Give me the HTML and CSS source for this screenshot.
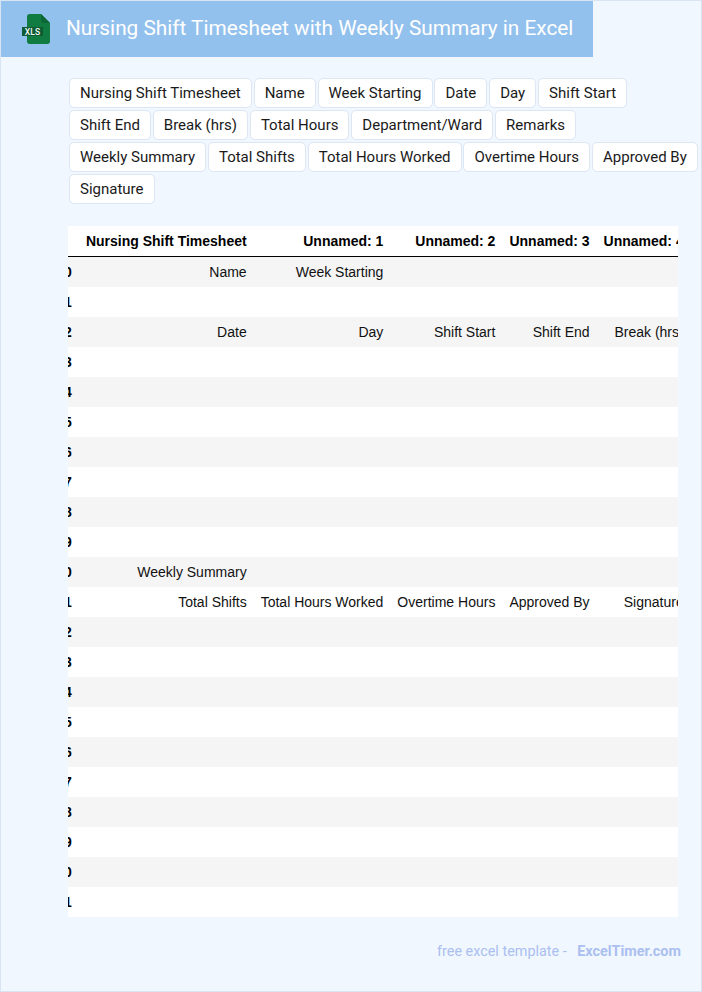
FILE: index.html
```html
<!DOCTYPE html>
<html lang="en">
<head>
<meta charset="utf-8">
<title>Nursing Shift Timesheet with Weekly Summary in Excel</title>
<link rel="stylesheet" href="styles.css">
</head>
<body>
<div class="page">
  <header class="banner">
    <svg class="file-icon" width="28" height="30" viewBox="0 0 28 30" aria-hidden="true">
      <path d="M5 2.500C5 1.100 6.100 0 7.500 0H19l9 9v18.500c0 1.400-1.100 2.500-2.500 2.500h-18C6.100 30 5 28.900 5 27.500Z" fill="#107c41"/>
      <path d="M19 0l9 9h-6.500C20.100 9 19 7.900 19 6.500Z" fill="#0c6636"/>
      <rect x="0" y="13" width="21" height="9" fill="#0d5c33"/>
      <text class="file-icon-label" x="10.500" y="20.800" text-anchor="middle">XLS</text>
    </svg>
    <h1 class="title">Nursing Shift Timesheet with Weekly Summary in Excel</h1>
  </header>

  <ul class="tags">
    <li class="tag">Nursing Shift Timesheet</li>
    <li class="tag">Name</li>
    <li class="tag">Week Starting</li>
    <li class="tag">Date</li>
    <li class="tag">Day</li>
    <li class="tag">Shift Start</li>
    <li class="tag">Shift End</li>
    <li class="tag">Break (hrs)</li>
    <li class="tag">Total Hours</li>
    <li class="tag">Department/Ward</li>
    <li class="tag">Remarks</li>
    <li class="tag">Weekly Summary</li>
    <li class="tag">Total Shifts</li>
    <li class="tag">Total Hours Worked</li>
    <li class="tag">Overtime Hours</li>
    <li class="tag">Approved By</li>
    <li class="tag">Signature</li>
  </ul>

  <div class="sheet">
    <table class="grid">
      <thead>
        <tr><th></th><th>Nursing Shift Timesheet</th><th>Unnamed: 1</th><th>Unnamed: 2</th><th>Unnamed: 3</th><th>Unnamed: 4</th></tr>
      </thead>
      <tbody>
        <tr><th>0</th><td>Name</td><td>Week Starting</td><td></td><td></td><td></td></tr>
        <tr><th>1</th><td></td><td></td><td></td><td></td><td></td></tr>
        <tr><th>2</th><td>Date</td><td>Day</td><td>Shift Start</td><td>Shift End</td><td>Break (hrs)</td></tr>
        <tr><th>3</th><td></td><td></td><td></td><td></td><td></td></tr>
        <tr><th>4</th><td></td><td></td><td></td><td></td><td></td></tr>
        <tr><th>5</th><td></td><td></td><td></td><td></td><td></td></tr>
        <tr><th>6</th><td></td><td></td><td></td><td></td><td></td></tr>
        <tr><th>7</th><td></td><td></td><td></td><td></td><td></td></tr>
        <tr><th>8</th><td></td><td></td><td></td><td></td><td></td></tr>
        <tr><th>9</th><td></td><td></td><td></td><td></td><td></td></tr>
        <tr><th>10</th><td>Weekly Summary</td><td></td><td></td><td></td><td></td></tr>
        <tr><th>11</th><td>Total Shifts</td><td>Total Hours Worked</td><td>Overtime Hours</td><td>Approved By</td><td>Signature</td></tr>
        <tr><th>12</th><td></td><td></td><td></td><td></td><td></td></tr>
        <tr><th>13</th><td></td><td></td><td></td><td></td><td></td></tr>
        <tr><th>14</th><td></td><td></td><td></td><td></td><td></td></tr>
        <tr><th>15</th><td></td><td></td><td></td><td></td><td></td></tr>
        <tr><th>16</th><td></td><td></td><td></td><td></td><td></td></tr>
        <tr><th>17</th><td></td><td></td><td></td><td></td><td></td></tr>
        <tr><th>18</th><td></td><td></td><td></td><td></td><td></td></tr>
        <tr><th>19</th><td></td><td></td><td></td><td></td><td></td></tr>
        <tr><th>20</th><td></td><td></td><td></td><td></td><td></td></tr>
        <tr><th>21</th><td></td><td></td><td></td><td></td><td></td></tr>
      </tbody>
    </table>
  </div>

  <footer class="credit">
    <span class="credit-text">free excel template -</span>
    <a class="credit-link" href="#">ExcelTimer.com</a>
  </footer>
</div>
</body>
</html>
```
FILE: styles.css
```css
* { box-sizing: border-box; }
html, body { margin: 0; padding: 0; }
body { font-family: "Roboto", sans-serif; }

.page {
  width: 702px;
  height: 992px;
  border: 1px solid #d9e4f3;
  background: #f0f7ff;
  overflow: hidden;
}

.banner {
  width: 592px;
  height: 56px;
  background: #93c1ed;
  display: flex;
  align-items: center;
  padding-left: 21px;
  gap: 16px;
}
.file-icon { flex: none; }
.file-icon-label {
  font-family: "Roboto", sans-serif;
  font-size: 8.5px;
  font-weight: 500;
  fill: #f2f8f4;
  letter-spacing: 0.2px;
}
.title {
  margin: 0 0 2px;
  font-size: 20.8px;
  font-weight: 400;
  color: #fff;
  white-space: nowrap;
}

.tags {
  list-style: none;
  margin: 21px 0 0 68px;
  padding: 0;
  display: flex;
  flex-wrap: wrap;
  gap: 2px 1.9px;
  width: 631px;
}
.tag {
  height: 30px;
  padding: 0 10px;
  display: flex;
  align-items: center;
  background: #fff;
  border: 1px solid #dde6f3;
  border-radius: 5px;
  font-size: 15px;
  color: #1a1a1a;
  white-space: nowrap;
}

.sheet {
  margin: 22px 0 0 67px;
  width: 610px;
  overflow: hidden;
  background: #fff;
}
.grid {
  margin-left: -18.7px;
  border-collapse: separate;
  border-spacing: 0;
  font-family: "Liberation Sans", Arial, sans-serif;
  font-size: 14px;
  color: #111;
  white-space: nowrap;
}
.grid th, .grid td {
  height: 30px;
  padding: 0 7px;
  text-align: right;
}
.grid th { font-weight: 700; color: #000; }
.grid thead th {
  height: 31px;
  border-bottom: 1px solid #000;
}
.grid tbody tr:nth-child(odd) { background: #f5f5f5; }

.credit {
  margin: 26px 0 0 436px;
  display: flex;
  gap: 10.5px;
  font-size: 14.4px;
  color: #abbff0;
  white-space: nowrap;
}
.credit-link {
  color: #abbff0;
  font-weight: 700;
  text-decoration: none;
}
```
